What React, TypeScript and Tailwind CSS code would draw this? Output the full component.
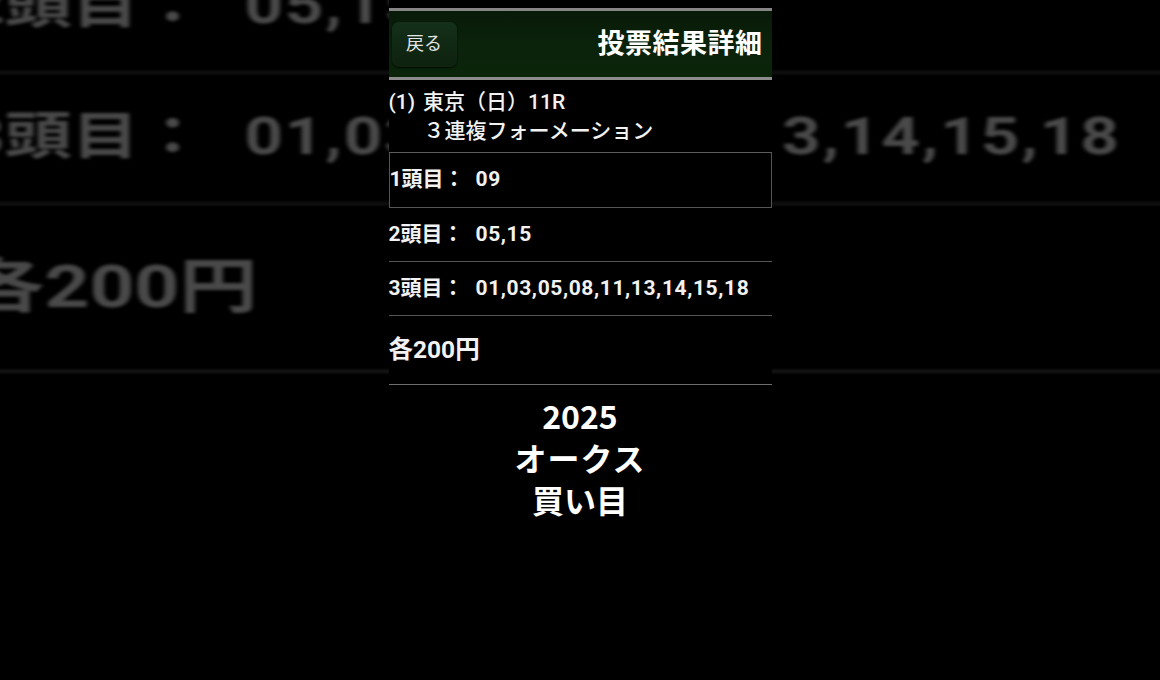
const sans = "font-['Roboto','Noto_Sans_CJK_JP',sans-serif]";

const legs = [
  { label: "1頭目：", value: "09", boxed: true },
  { label: "2頭目：", value: "05,15", boxed: false },
  { label: "3頭目：", value: "01,03,05,08,11,13,14,15,18", boxed: false },
];

function Screen({ caption }: { caption: boolean }) {
  return (
    <div className={`w-[383px] bg-black text-[#f2f2f2] ${sans}`}>
      <div className="h-[8px]" />
      <div className="h-[3px] bg-[#858585]" />
      <header className="flex h-[66px] items-center justify-between bg-gradient-to-b from-[#081a08] via-[#0b220b] to-[#0a250a] pl-[3px] pr-[9px]">
        <button className="h-[45px] w-[65px] rounded-[7px] bg-gradient-to-b from-[#14301a] to-[#0e220e] text-[18px] leading-none text-[#e4e4e4] shadow-[0_1px_2px_rgba(0,0,0,0.8)]">
          戻る
        </button>
        <h1 className="text-[27px] font-bold leading-none tracking-[0.5px] text-white">投票結果詳細</h1>
      </header>
      <div className="h-[3px] bg-[#8c8c8c]" />

      <div className="border-b border-[#5c5c5c] pb-[6px] pt-[8px] text-[21px] font-medium leading-[29px]">
        <div className="flex">
          <span>(1)</span>
          <span className="ml-[8px]">東京（日）11R</span>
        </div>
        <div className="pl-[35px]">３連複フォーメーション</div>
      </div>

      {legs.map((leg) => (
        <div
          key={leg.label}
          className={`flex items-center border-b border-[#555] text-[21px] font-bold tracking-[0.6px] ${
            leg.boxed ? "h-[55px] border-x" : "h-[54px]"
          }`}
        >
          <span className={`shrink-0 tracking-normal ${leg.boxed ? "w-[86px]" : "w-[87px]"}`}>{leg.label}</span>
          <span>{leg.value}</span>
        </div>
      ))}

      <div className="flex h-[69px] items-center border-b border-[#6e6e6e] text-[24.5px] font-bold">
        各200円
      </div>

      {caption ? (
        <div className="h-[294px] pt-[9px] text-center font-['Noto_Sans_CJK_JP',sans-serif] text-[32px] font-bold leading-[42px] text-white">
          <div>2025</div>
          <div className="tracking-[1px]">オークス</div>
          <div>買い目</div>
        </div>
      ) : (
        <div className="h-[294px]" />
      )}
    </div>
  );
}

export default function App() {
  return (
    <div className="relative h-[680px] w-[1160px] overflow-hidden bg-black">
      <div className="absolute inset-0 overflow-hidden">
        <div className="absolute left-0 top-0 origin-top-left opacity-30 blur-[0.6px] [transform:translate(-34px,-563px)_scale(3.2,2.43)]">
          <Screen caption={false} />
        </div>
      </div>
      <div className="relative mx-auto h-[680px] w-[383px] bg-black">
        <Screen caption />
      </div>
    </div>
  );
}
